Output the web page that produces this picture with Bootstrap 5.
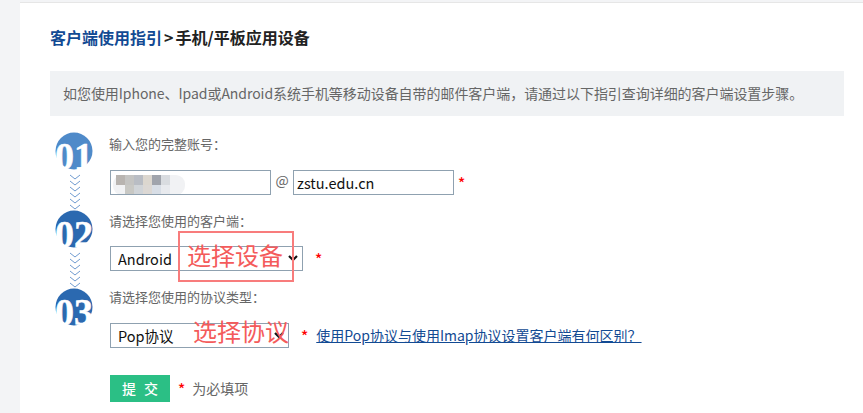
<!DOCTYPE html>
<html lang="zh-CN">

<head>
    <meta charset="UTF-8">
    <meta name="viewport" content="width=device-width, initial-scale=1.0">
    <title>客户端使用指引</title>
    <link href="https://cdn.jsdelivr.net/npm/bootstrap@5.3.0/dist/css/bootstrap.min.css" rel="stylesheet">
    <style>
        html, body { height: 100%; }
        body {
            background: #f3f4f6;
            font-family: "Noto Sans CJK SC", "Noto Sans", sans-serif;
            font-size: 13px;
            color: #666;
            overflow: hidden;
        }
        .page-panel {
            position: relative;
            margin-left: 20px;
            height: 411px;
            margin-top: 2px;
            background: #fff;
            border-top: 1px solid #e6e6e6;
            padding: 0 19px 0 30px;
        }
        .crumb-title { font-size: 16px; font-weight: 700; line-height: 24px; padding-top: 22px; color: #222; height: 68px; margin: 0; }
        .crumb-title a { color: #124a93; text-decoration: none; }
        .crumb-gt { margin: 0 2px; }
        .info-bar { background: #f0f2f4; height: 45px; line-height: 45px; padding-left: 13px; margin-bottom: 16px; font-size: 14px; letter-spacing: -.05px; color: #666; white-space: nowrap; }
        .step-row { height: 77px; }
        .step-side { width: 60px; flex: none; padding-left: 5px; }
        .side-two { padding-top: 1px; }
        .side-three { padding-top: 2px; }
        .step-num { display: block; margin-bottom: -6px; }
        .step-num text { font-family: "Liberation Serif", serif; font-weight: 700; font-size: 38px; fill: #fff; stroke: #fff; stroke-width: .5; }
        .step-down { display: block; margin: 2px 0 0 8px; }
        .step-label { line-height: 24px; font-size: 13px; color: #666; height: 38px; margin-left: -1px; }
        .label-short { height: 37px; }
        .label-tight { line-height: 22px; height: 37px; }
        .txt-box, .sel-box {
            border: 1px solid #8fa1b0;
            border-radius: 0;
            height: 25px;
            padding: 0 3px;
            font-size: 14.5px;
            color: #111;
            box-shadow: none;
            background-color: #fff;
        }
        .sel-box {
            padding: 0 20px 0 7px;
            background-image: url("data:image/svg+xml,%3csvg xmlns='http://www.w3.org/2000/svg' viewBox='0 0 10 7'%3e%3cpath fill='none' stroke='%23111' stroke-width='2.2' d='M1 1l4 4 4-4'/%3e%3c/svg%3e");
            background-position: right 4px center;
            background-size: 10px 7px;
        }
        .w-user { width: 161px; position: relative; overflow: hidden; }
        .w-domain { width: 161px; }
        .w-client { width: 193px; }
        .w-proto { width: 179px; }
        .at-sign { width: 22px; text-align: center; font-size: 14px; margin-top: -4px; }
        .req-star { color: #f00; font-size: 15px; font-weight: 500; line-height: 1; }
        .help-link { color: #124a93; font-size: 14px; margin-left: 8px; }
        .mosaic { position: absolute; left: 2px; top: 2px; }
        .submit-btn { background: #2bbf85; color: #fff; border: 0; border-radius: 0; width: 60px; height: 27px; padding: 0; font-size: 14px; letter-spacing: 8px; text-indent: 8px; font-weight: 500; }
        .submit-line { margin-left: 60px; margin-top: 12px; }
        .must-note { font-size: 14px; color: #666; margin-left: 7px; }
        .note-box { position: absolute; left: 158px; top: 228px; width: 116px; height: 51px; border: 2px solid #f87c7c; }
        .note-text { position: absolute; color: #f45b5b; font-size: 24px; line-height: 30px; white-space: nowrap; }
        .note-device { left: 167px; top: 237px; }
        .note-proto { left: 173px; top: 313px; }
    </style>
</head>

<body>
    <div class="page-panel">
        <h1 class="crumb-title"><a href="#">客户端使用指引</a><span class="crumb-gt">&gt;</span>手机/平板应用设备</h1>
        <div class="info-bar">如您使用Iphone、Ipad或Android系统手机等移动设备自带的邮件客户端，请通过以下指引查询详细的客户端设置步骤。</div>

        <div class="step-row d-flex">
            <div class="step-side">
                <svg class="step-num" width="38" height="46" viewBox="0 0 38 46"><circle cx="19" cy="19" r="18.5" fill="#4f8ac9"/><text x="0" y="37" textLength="38" lengthAdjust="spacingAndGlyphs">01</text></svg>
                <svg class="step-down" width="24" height="36" viewBox="0 0 24 36" fill="none" stroke="#6f9bd0" stroke-width="1"><path d="M7 1l5 4 5-4M7 7l5 4 5-4M7 13l5 4 5-4M7 19l5 4 5-4M7 25l5 4 5-4M7 31l5 4 5-4"/></svg>
            </div>
            <div>
                <div class="step-label">输入您的完整账号：</div>
                <div class="d-flex align-items-center">
                    <div class="txt-box w-user">
                        <svg class="mosaic" width="74" height="22"><rect x="0" y="2" width="72" height="20" rx="9" fill="#f1f2f4"/><rect x="3" y="2" width="9" height="10" fill="#b8b4b0"/><rect x="12" y="2" width="9" height="10" fill="#c4c4c2"/><rect x="21" y="2" width="9" height="10" fill="#b9bdc4"/><rect x="30" y="2" width="9" height="10" fill="#dcd7cf"/><rect x="39" y="2" width="9" height="10" fill="#a0a4ac"/><rect x="48" y="2" width="9" height="10" fill="#d9dce0"/><rect x="12" y="12" width="9" height="9" fill="#c8c8c4"/><rect x="21" y="12" width="9" height="9" fill="#d0d4d8"/><rect x="30" y="12" width="9" height="9" fill="#dcd8d4"/><rect x="39" y="12" width="9" height="9" fill="#d8dee6"/><rect x="48" y="12" width="9" height="9" fill="#e8eaee"/></svg>
                    </div>
                    <div class="at-sign">@</div>
                    <input class="txt-box w-domain form-control-plaintext" type="text" value="zstu.edu.cn">
                    <span class="req-star ms-1">*</span>
                </div>
            </div>
        </div>

        <div class="step-row d-flex">
            <div class="step-side side-two">
                <svg class="step-num" width="38" height="46" viewBox="0 0 38 46"><circle cx="19" cy="19" r="18.5" fill="#2b69b0"/><text x="0" y="37" textLength="38" lengthAdjust="spacingAndGlyphs">02</text></svg>
                <svg class="step-down" width="24" height="36" viewBox="0 0 24 36" fill="none" stroke="#6f9bd0" stroke-width="1"><path d="M7 1l5 4 5-4M7 7l5 4 5-4M7 13l5 4 5-4M7 19l5 4 5-4M7 25l5 4 5-4M7 31l5 4 5-4"/></svg>
            </div>
            <div>
                <div class="step-label label-short">请选择您使用的客户端：</div>
                <div class="d-flex align-items-center">
                    <select class="form-select sel-box w-client"><option>Android</option></select>
                    <span class="req-star ms-2 ps-1">*</span>
                </div>
            </div>
        </div>

        <div class="step-row d-flex">
            <div class="step-side side-three">
                <svg class="step-num" width="38" height="46" viewBox="0 0 38 46"><circle cx="19" cy="19" r="18.5" fill="#2b69b0"/><text x="0" y="37" textLength="38" lengthAdjust="spacingAndGlyphs">03</text></svg>
            </div>
            <div>
                <div class="step-label label-tight">请选择您使用的协议类型：</div>
                <div class="d-flex align-items-center">
                    <select class="form-select sel-box w-proto"><option>Pop协议</option></select>
                    <span class="req-star ms-2 ps-1">*</span>
                    <a class="help-link" href="#">使用Pop协议与使用Imap协议设置客户端有何区别？</a>
                </div>
            </div>
        </div>

        <div class="submit-line d-flex align-items-center">
            <button class="btn submit-btn" type="button">提交</button>
            <span class="req-star ms-2">*</span>
            <span class="must-note">为必填项</span>
        </div>

        <div class="note-box"></div>
        <div class="note-text note-device">选择设备</div>
        <div class="note-text note-proto">选择协议</div>
    </div>

    <script src="https://cdn.jsdelivr.net/npm/bootstrap@5.3.0/dist/js/bootstrap.bundle.min.js"></script>
</body>

</html>
